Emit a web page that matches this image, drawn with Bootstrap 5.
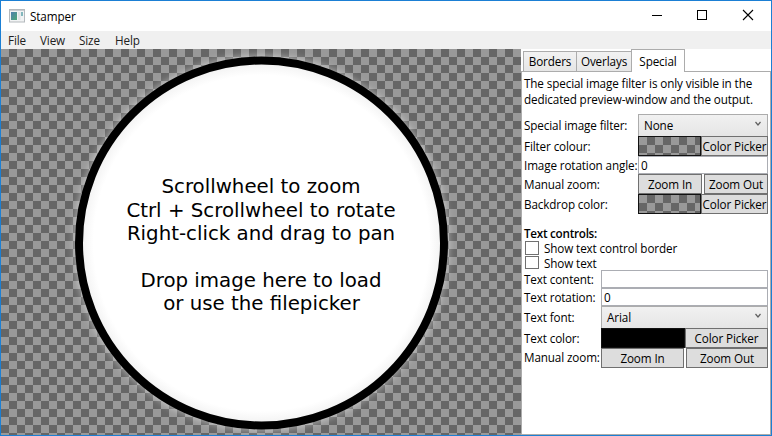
<!DOCTYPE html>
<html lang="en">
<head>
<meta charset="utf-8">
<title>Stamper</title>
<link href="https://cdn.jsdelivr.net/npm/bootstrap@5.3.0/dist/css/bootstrap.min.css" rel="stylesheet">
<style>
html,body{height:100%;overflow:hidden}
body{font-family:"Open Sans","Noto Sans",sans-serif;font-size:11.7px;line-height:16px;letter-spacing:-.12px;color:#000}
.app-window{width:772px;height:436px;border:1px solid #1b7fd4}
.title-bar{height:30px;padding-left:8px}
.title-bar .caption{padding-left:5px;margin-top:-1px}
.win-buttons{width:138px}
.win-buttons svg{width:46px;height:30px;display:block}
.menu-strip{height:18px;background:#f0f0f0;padding-left:7px;color:#212121}
.menu-strip .nav-link{color:inherit;padding:0;line-height:18px}
.menu-strip .m-file{width:32px}.menu-strip .m-view{width:39px}.menu-strip .m-size{width:36px}
.checker{background:repeating-conic-gradient(#666 0 25%,#999 0 50%) 0 0/16px 16px}
.preview{width:520px;height:386px}
.preview svg{display:block}
.preview text{font-family:"DejaVu Sans",Verdana,sans-serif;font-size:19.8px;letter-spacing:0;text-anchor:middle}
.side{width:250px;height:386px}
.tab-strip{height:22px;padding-left:2px;border:0}
.tab-strip .nav-link{border:1px solid #acacac;border-bottom:0;border-radius:0;color:#000;padding:0;margin:0;text-align:center;height:20px;line-height:19px;background:linear-gradient(#f2f2f2,#e6e6e6)}
.tab-strip .nav-link.active{height:23px;background:#fff;border-color:#acacac;line-height:22px;margin-bottom:-1px;z-index:2;position:relative}
.t-borders{width:54px}.tab-strip .t-overlays{width:56px;margin-left:-1px}.tab-strip .t-special{width:54px;margin-left:-1px}
.tab-page{border:1px solid #acacac;padding:3px 2px 0 2px}
.hint{height:39px;white-space:nowrap}
.prop{display:grid;grid-template-columns:114px 130px}
.prop.narrow{grid-template-columns:77px 167px}
.prop>span{white-space:nowrap}
.h18{height:18px;line-height:18px}.h20{height:20px;line-height:20px}.h22{height:22px;line-height:23px}
.prop .form-select,.prop .form-control,.prop .btn{border-radius:0;font-size:11.7px;letter-spacing:inherit;color:#000;min-height:0;height:100%;padding:0}
.prop .form-select{border-color:#acacac;background:linear-gradient(#f1f1f1,#e5e5e5);display:flex;justify-content:space-between;padding:0 5px;line-height:21px}
.prop .form-control{border-color:#abadb3;padding-left:2px;line-height:16px}
.prop .btn{background:#ddd;border-color:#707070;line-height:18px;white-space:nowrap}
.swatch{border:1px solid #111;height:100%}
.w63{width:63px}.w64{width:64px}.w67{width:67px}.w83{width:83px}.w84{width:84px}.w82{width:82px}
.heading{font-weight:600;margin-top:11px;height:16px;line-height:16px;letter-spacing:-.27px}
.check-row{height:15px;line-height:14px;padding-left:1px}
.check-row.tight{height:14px}
.check-row .form-check-input{width:14px;height:14px;border:1px solid #707070;border-radius:0;margin:0 5px 0 0}
.check-row.tight .form-check-input{height:13px}
.raise{line-height:18px}
</style>
</head>
<body>
<div class="app-window d-flex flex-column bg-white">
  <header class="title-bar d-flex align-items-center">
    <svg width="16" height="14" viewBox="0 0 16 14"><defs><linearGradient id="ig" x2="1" y2="1"><stop stop-color="#4f7fae"/><stop offset="1" stop-color="#4da877"/></linearGradient></defs><rect x=".5" y=".5" width="15" height="12.5" fill="#f1f3f4" stroke="#b4b9bd"/><path d="M1 1.5h14" stroke="#c9cdd1"/><rect x="2" y="3" width="6" height="8" fill="url(#ig)"/><rect x="9" y="3" width="2.5" height="8" fill="#e0e4e6"/><rect x="12" y="3" width="2" height="4" fill="#82b7bd"/></svg>
    <span class="caption">Stamper</span>
    <div class="win-buttons d-flex ms-auto">
      <svg viewBox="0 0 46 30"><path d="M19 14.5h10" stroke="#000"/></svg>
      <svg viewBox="0 0 46 30"><rect x="18.5" y="9.5" width="9" height="9" fill="none" stroke="#000"/></svg>
      <svg viewBox="0 0 46 30"><path d="M18 9l10 10M28 9l-10 10" stroke="#000" stroke-width="1.1"/></svg>
    </div>
  </header>
  <nav class="menu-strip d-flex">
    <a class="nav-link m-file">File</a><a class="nav-link m-view">View</a><a class="nav-link m-size">Size</a><a class="nav-link">Help</a>
  </nav>
  <main class="d-flex">
    <section class="preview checker">
      <svg width="520" height="386" viewBox="0 0 520 386">
        <defs><filter id="soft" x="-10%" y="-10%" width="120%" height="120%"><feGaussianBlur stdDeviation="4"/></filter>
        <radialGradient id="disc"><stop offset=".92" stop-color="#fff"/><stop offset="1" stop-color="#f0f0f0"/></radialGradient></defs>
        <circle cx="260.5" cy="194" r="186" fill="#fff" opacity=".65" filter="url(#soft)"/>
        <circle cx="260.5" cy="194" r="182.5" fill="url(#disc)" stroke="#000" stroke-width="8"/>
        <text x="260" y="144">Scrollwheel to zoom</text>
        <text x="260" y="168">Ctrl + Scrollwheel to rotate</text>
        <text x="260" y="191">Right-click and drag to pan</text>
        <text x="260" y="238">Drop image here to load</text>
        <text x="260.5" y="261">or use the filepicker</text>
      </svg>
    </section>
    <aside class="side d-flex flex-column">
      <div class="nav nav-tabs tab-strip d-flex align-items-end flex-nowrap">
        <a class="nav-link t-borders">Borders</a><a class="nav-link t-overlays">Overlays</a><a class="nav-link active t-special">Special</a>
      </div>
      <div class="tab-page flex-grow-1">
        <div class="hint">The special image filter is only visible in the<br>dedicated preview-window and the output.</div>
        <div class="prop h22"><span>Special image filter:</span><div class="form-select"><span>None</span><svg width="8" height="18" viewBox="0 0 8 18"><path d="M1.5 7l2.5 3 2.5-3" fill="none" stroke="#606060" stroke-width="1.2"/></svg></div></div>
        <div class="prop h20"><span>Filter colour:</span><div class="d-flex"><div class="swatch checker w63"></div><button class="btn w67">Color Picker</button></div></div>
        <div class="prop h18"><span>Image rotation angle:</span><input class="form-control" value="0"></div>
        <div class="prop h20"><span>Manual zoom:</span><div class="d-flex justify-content-between"><button class="btn w64">Zoom In</button><button class="btn w64">Zoom Out</button></div></div>
        <div class="prop h20"><span>Backdrop color:</span><div class="d-flex"><div class="swatch checker w63"></div><button class="btn w67">Color Picker</button></div></div>
        <div class="heading">Text controls:</div>
        <label class="check-row d-flex"><input type="checkbox" class="form-check-input"><span>Show text control border</span></label>
        <label class="check-row tight d-flex"><input type="checkbox" class="form-check-input"><span>Show text</span></label>
        <div class="prop narrow h18"><span>Text content:</span><input class="form-control"></div>
        <div class="prop narrow h18"><span>Text rotation:</span><input class="form-control" value="0"></div>
        <div class="prop narrow h22"><span>Text font:</span><div class="form-select"><span>Arial</span><svg width="8" height="18" viewBox="0 0 8 18"><path d="M1.5 7l2.5 3 2.5-3" fill="none" stroke="#606060" stroke-width="1.2"/></svg></div></div>
        <div class="prop narrow h20"><span>Text color:</span><div class="d-flex"><div class="swatch bg-black w84"></div><button class="btn w83">Color Picker</button></div></div>
        <div class="prop narrow h20"><span class="raise">Manual zoom:</span><div class="d-flex justify-content-between"><button class="btn w83">Zoom In</button><button class="btn w82">Zoom Out</button></div></div>
      </div>
    </aside>
  </main>
</div>
<script src="https://cdn.jsdelivr.net/npm/bootstrap@5.3.0/dist/js/bootstrap.bundle.min.js"></script>
</body>
</html>
